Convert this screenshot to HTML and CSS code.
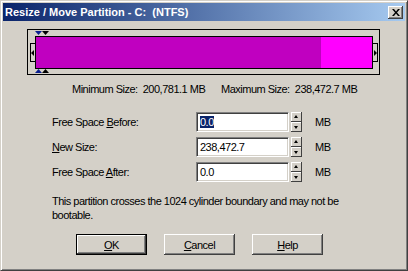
FILE: index.html
```html
<!DOCTYPE html>
<html lang="en">
<head>
    <meta charset="UTF-8">
    <title>Resize / Move Partition</title>
    <link rel="stylesheet" href="styles.css">
</head>
<body>
    <div class="window">
        <div class="titlebar">
            <span class="title">Resize / Move Partition - C:&nbsp; (NTFS)</span>
            <button class="close-btn" type="button">
                <svg width="8" height="7" viewBox="0 0 8 7">
                    <path d="M0 0h2l2 2.5 2-2.5h2l-3 3.5 3 3.5h-2l-2-2.5-2 2.5h-2l3-3.5z" fill="#000"/>
                </svg>
            </button>
        </div>

        <div class="content">
            <!-- partition graph -->
            <div class="disk">
                <svg class="marks marks-top" width="14" height="4" viewBox="0 0 14 4">
                    <path d="M0 0h7l-3.5 4z" fill="#0a1f8f"/>
                    <path d="M7 0h7l-3.5 4z" fill="#000"/>
                </svg>
                <div class="gutter gutter-left">
                    <div class="handle handle-left">
                        <svg width="3" height="6" viewBox="0 0 3 6"><path d="M3 0v6l-3-3z" fill="#000"/></svg>
                    </div>
                </div>
                <div class="bar">
                    <div class="bar-used"></div>
                    <div class="bar-free"></div>
                </div>
                <div class="gutter gutter-right">
                    <div class="handle handle-right">
                        <svg width="3" height="6" viewBox="0 0 3 6"><path d="M0 0v6l3-3z" fill="#000"/></svg>
                    </div>
                </div>
                <svg class="marks marks-bottom" width="14" height="4" viewBox="0 0 14 4">
                    <path d="M0 4h7l-3.5-4z" fill="#0a1f8f"/>
                    <path d="M7 4h7l-3.5-4z" fill="#000"/>
                </svg>
            </div>

            <div class="sizes">
                <span class="size-min">Minimum Size:&nbsp; 200,781.1 MB</span>
                <span>Maximum Size:&nbsp; 238,472.7 MB</span>
            </div>

            <div class="fields">
                <label for="before">Free Space <u>B</u>efore:</label>
                <div class="field"><span class="selected">0.0</span></div>
                <div class="spin"><span class="spin-up"></span><span class="spin-down"></span></div>
                <span class="unit">MB</span>

                <label for="newsize"><u>N</u>ew Size:</label>
                <div class="field">238,472.7</div>
                <div class="spin"><span class="spin-up"></span><span class="spin-down"></span></div>
                <span class="unit">MB</span>

                <label for="after">Free Space <u>A</u>fter:</label>
                <div class="field">0.0</div>
                <div class="spin"><span class="spin-up"></span><span class="spin-down"></span></div>
                <span class="unit">MB</span>
            </div>

            <p class="message">This partition crosses the 1024 cylinder boundary and may not be<br>bootable.</p>

            <div class="buttons">
                <button class="btn btn-default" type="button"><u>O</u>K</button>
                <button class="btn" type="button"><u>C</u>ancel</button>
                <button class="btn" type="button"><u>H</u>elp</button>
            </div>
        </div>
    </div>
</body>
</html>
```

FILE: styles.css
```css
body {
    margin: 0;
    font-family: "Liberation Sans", Arial, sans-serif;
    font-size: 11px;
    letter-spacing: -0.5px;
    color: #000;
    background-color: #d4d0c8;
}

.window {
    width: 408px;
    height: 271px;
    box-sizing: border-box;
    padding: 2px;
    border: 1px solid;
    border-color: #d4d0c8 #404040 #404040 #d4d0c8;
    box-shadow: inset 1px 1px #fff, inset -1px -1px #808080;
    background-color: #d4d0c8;
}

.titlebar {
    height: 18px;
    display: flex;
    align-items: center;
    justify-content: space-between;
    padding-left: 2px;
    background: linear-gradient(to right, #0a246a, #a6caf0);
}

.title {
    color: #fff;
    font-weight: bold;
    letter-spacing: 0;
}

.close-btn {
    width: 15px;
    height: 13px;
    margin-right: 2px;
    padding: 0;
    border: none;
    background-color: #d4d0c8;
    box-shadow: inset -1px -1px #404040, inset 1px 1px #fff, inset -2px -2px #808080;
    display: flex;
    align-items: center;
    justify-content: center;
}

.close-btn svg {
    display: block;
}

/* partition graph */
.disk {
    position: relative;
    width: 353px;
    height: 46px;
    box-sizing: border-box;
    margin: 8px 0 0 24px;
    padding-top: 6px;
    border: 1px solid #000;
    display: flex;
    background-color: #d4d0c8;
}

.marks {
    position: absolute;
    left: 7px;
    display: block;
}

.marks-top {
    top: 1px;
}

.marks-bottom {
    bottom: 1px;
}

.gutter {
    height: 33px;
    display: flex;
    align-items: center;
}

.gutter-left {
    width: 7px;
    justify-content: flex-end;
}

.gutter-right {
    width: 6px;
}

.handle {
    width: 5px;
    height: 19px;
    box-sizing: border-box;
    border: 1px solid #000;
    background-color: #d4d0c8;
    display: flex;
    align-items: center;
}

.handle-left {
    border-right: none;
    justify-content: flex-start;
}

.handle-right {
    border-left: none;
    justify-content: flex-end;
}

.handle svg {
    display: block;
}

.bar {
    width: 338px;
    height: 33px;
    box-sizing: border-box;
    border: 1px solid #000;
    display: flex;
}

.bar-used {
    width: 285px;
    background-color: #c000c0;
}

.bar-free {
    flex: 1;
    background-color: #ff00ff;
}

.sizes {
    display: flex;
    margin-top: 8px;
    padding-left: 69px;
    line-height: 13px;
}

.size-min {
    width: 149px;
}

/* fields */
.fields {
    display: grid;
    grid-template-columns: 142px 93px 11px auto;
    column-gap: 2px;
    row-gap: 5px;
    align-items: center;
    margin-top: 16px;
    padding-left: 49px;
}

.field {
    height: 20px;
    box-sizing: border-box;
    padding: 2px 0 0 3px;
    border: 1px solid;
    border-color: #808080 #fff #fff #808080;
    box-shadow: inset 1px 1px #404040, inset -1px -1px #d4d0c8;
    background-color: #fff;
    line-height: 14px;
}

.selected {
    background-color: #0a246a;
    color: #fff;
}

.spin {
    display: flex;
    flex-direction: column;
    height: 20px;
}

.spin-up,
.spin-down {
    position: relative;
    height: 10px;
    box-sizing: border-box;
    background-color: #d4d0c8;
    box-shadow: inset -1px -1px #404040, inset 1px 1px #fff;
}

.spin-up::after,
.spin-down::after {
    content: "";
    position: absolute;
    left: 3px;
    border-left: 2.5px solid transparent;
    border-right: 2.5px solid transparent;
}

.spin-up::after {
    top: 3px;
    border-bottom: 3px solid #000;
}

.spin-down::after {
    top: 4px;
    border-top: 3px solid #000;
}

.unit {
    margin-left: 11px;
}

.message {
    margin: 12px 0 0;
    padding-left: 49px;
    line-height: 14px;
}

.buttons {
    display: flex;
    gap: 17px;
    margin-top: 12px;
    padding-left: 73px;
}

.btn {
    width: 71px;
    height: 21px;
    padding: 0;
    border: none;
    font-family: inherit;
    font-size: 11px;
    letter-spacing: -0.5px;
    color: #000;
    background-color: #d4d0c8;
    box-shadow: inset -1px -1px #404040, inset 1px 1px #fff, inset -2px -2px #808080;
}

.btn-default {
    border: 1px solid #000;
    box-shadow: inset -1px -1px #404040, inset 1px 1px #fff, inset -2px -2px #808080;
}
```
